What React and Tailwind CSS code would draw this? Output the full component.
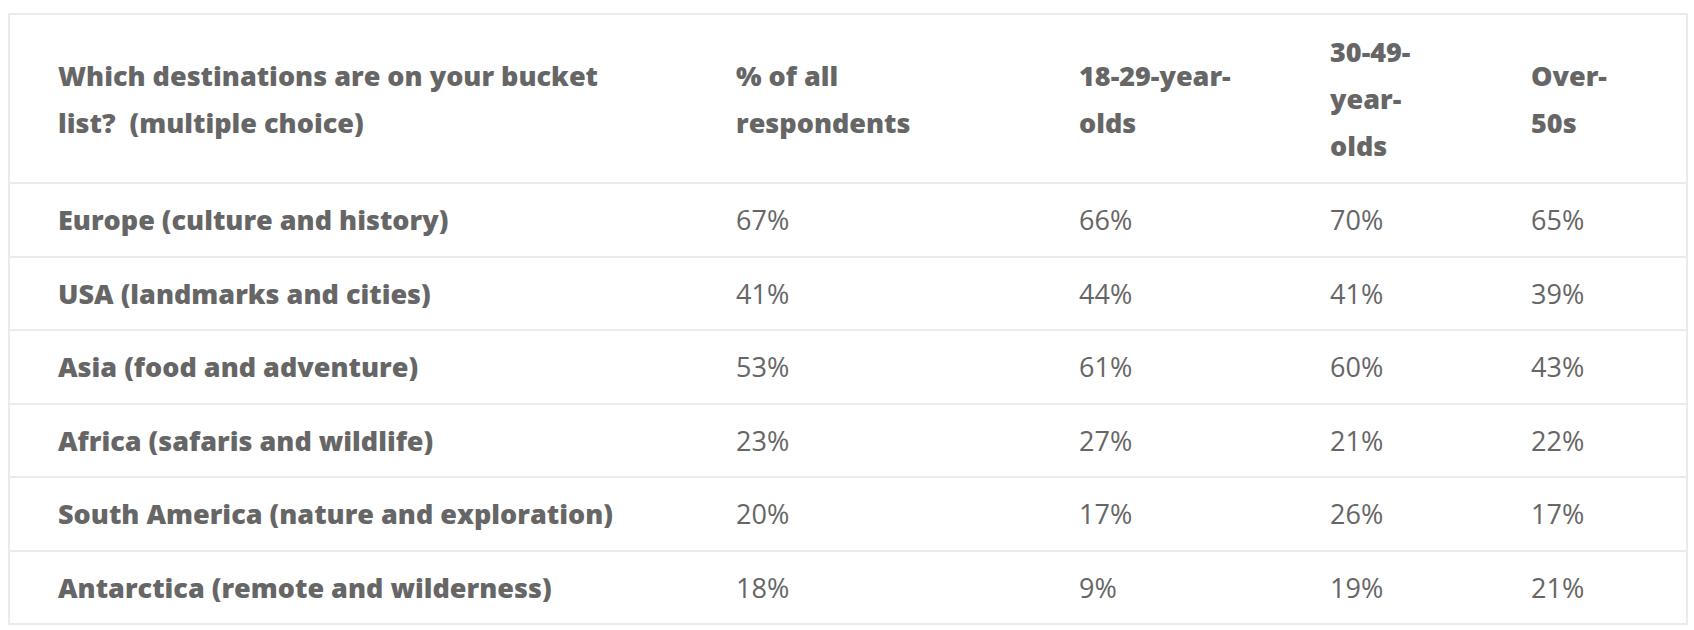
import React from "react";

const rows = [
  ["Europe (culture and history)", "67%", "66%", "70%", "65%"],
  ["USA (landmarks and cities)", "41%", "44%", "41%", "39%"],
  ["Asia (food and adventure)", "53%", "61%", "60%", "43%"],
  ["Africa (safaris and wildlife)", "23%", "27%", "21%", "22%"],
  ["South America (nature and exploration)", "20%", "17%", "26%", "17%"],
  ["Antarctica (remote and wilderness)", "18%", "9%", "19%", "21%"],
];

const App = () => {
  return (
    <div className="p-2 pt-[13px] bg-white min-h-screen" style={{ fontFamily: '"Open Sans", "Noto Sans", sans-serif' }}>
      <table className="w-[1680px] table-fixed border-collapse border-2 border-[#ebebeb] text-[27px] leading-[47px] text-[#666]">
        <thead>
          <tr className="border-b-2 border-[#ebebeb]">
            <th className="w-[679px] px-12 py-[13px] text-left align-middle font-extrabold">Which destinations are on your bucket list?&nbsp; (multiple choice)</th>
            <th className="w-[343px] px-12 py-[13px] text-left align-middle font-extrabold">% of all respondents</th>
            <th className="w-[251px] px-12 py-[13px] text-left align-middle font-extrabold">18-29-year-olds</th>
            <th className="w-[201px] px-12 py-[13px] text-left align-middle font-extrabold">30-49-year-olds</th>
            <th className="px-12 py-[13px] text-left align-middle font-extrabold">Over-50s</th>
          </tr>
        </thead>
        <tbody>
          {rows.map((r) => (
            <tr key={r[0]} className="border-b-2 border-[#ebebeb]">
              <td className="px-12 py-[12.25px] font-extrabold">{r[0]}</td>
              {r.slice(1).map((v, i) => (
                <td key={i} className="px-12 py-[12.25px]">{v}</td>
              ))}
            </tr>
          ))}
        </tbody>
      </table>
    </div>
  );
};

export default App;
